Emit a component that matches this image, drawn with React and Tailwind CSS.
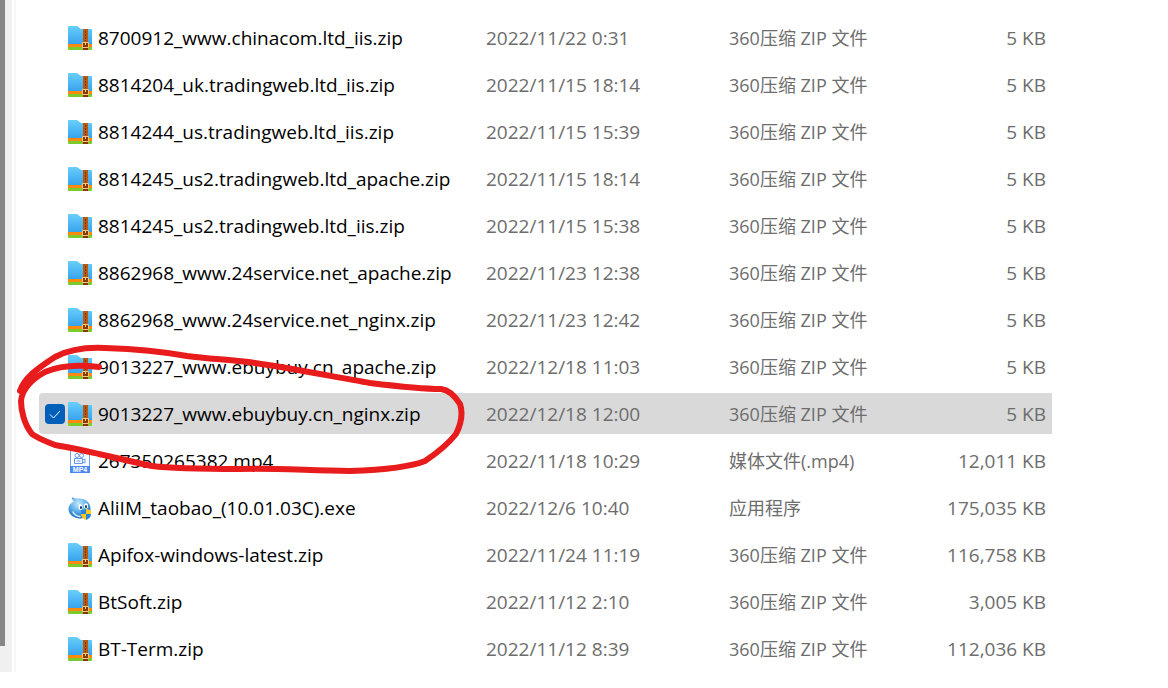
import { useState } from "react";

const FILES = [
  { name: "8700912_www.chinacom.ltd_iis.zip", date: "2022/11/22 0:31", type: "360压缩 ZIP 文件", size: "5 KB", icon: "zip" },
  { name: "8814204_uk.tradingweb.ltd_iis.zip", date: "2022/11/15 18:14", type: "360压缩 ZIP 文件", size: "5 KB", icon: "zip" },
  { name: "8814244_us.tradingweb.ltd_iis.zip", date: "2022/11/15 15:39", type: "360压缩 ZIP 文件", size: "5 KB", icon: "zip" },
  { name: "8814245_us2.tradingweb.ltd_apache.zip", date: "2022/11/15 18:14", type: "360压缩 ZIP 文件", size: "5 KB", icon: "zip" },
  { name: "8814245_us2.tradingweb.ltd_iis.zip", date: "2022/11/15 15:38", type: "360压缩 ZIP 文件", size: "5 KB", icon: "zip" },
  { name: "8862968_www.24service.net_apache.zip", date: "2022/11/23 12:38", type: "360压缩 ZIP 文件", size: "5 KB", icon: "zip" },
  { name: "8862968_www.24service.net_nginx.zip", date: "2022/11/23 12:42", type: "360压缩 ZIP 文件", size: "5 KB", icon: "zip" },
  { name: "9013227_www.ebuybuy.cn_apache.zip", date: "2022/12/18 11:03", type: "360压缩 ZIP 文件", size: "5 KB", icon: "zip" },
  { name: "9013227_www.ebuybuy.cn_nginx.zip", date: "2022/12/18 12:00", type: "360压缩 ZIP 文件", size: "5 KB", icon: "zip" },
  { name: "267350265382.mp4", date: "2022/11/18 10:29", type: "媒体文件(.mp4)", size: "12,011 KB", icon: "mp4" },
  { name: "AliIM_taobao_(10.01.03C).exe", date: "2022/12/6 10:40", type: "应用程序", size: "175,035 KB", icon: "app" },
  { name: "Apifox-windows-latest.zip", date: "2022/11/24 11:19", type: "360压缩 ZIP 文件", size: "116,758 KB", icon: "zip" },
  { name: "BtSoft.zip", date: "2022/11/12 2:10", type: "360压缩 ZIP 文件", size: "3,005 KB", icon: "zip" },
  { name: "BT-Term.zip", date: "2022/11/12 8:39", type: "360压缩 ZIP 文件", size: "112,036 KB", icon: "zip" },
];

function ZipIcon() {
  return (
    <svg viewBox="0 0 24 24" className="size-6 shrink-0" aria-hidden="true">
      <defs>
        <linearGradient id="zip-blue" x1="0" y1="0" x2="0" y2="1">
          <stop offset="0" stopColor="#68cffa" />
          <stop offset="1" stopColor="#38a3ee" />
        </linearGradient>
      </defs>
      <path d="M0 1a1 1 0 0 1 1-1h8l4 3h10a1 1 0 0 1 1 1v14H0z" fill="url(#zip-blue)" />
      <path d="M0 18h24v3H0z" fill="#ff8a0c" />
      <path d="M0 21h24v2a1 1 0 0 1-1 1H1a1 1 0 0 1-1-1z" fill="#7ccb2c" />
      <path d="M15 3h5v18h-5z" fill="#b9590f" />
      <path d="M15 21h5v3h-5z" fill="#8f3300" />
      <path d="M17.5 5v10" stroke="#7a3608" strokeWidth="1" strokeDasharray="2 1" />
      <path d="M14.5 16.5h6v5h-6z" fill="#8a3a06" stroke="#f8c878" strokeWidth="1" />
      <path d="M17.5 16v3" stroke="#f8c878" strokeWidth="1" />
    </svg>
  );
}

function Mp4Icon() {
  return (
    <svg viewBox="0 0 24 24" className="size-6 shrink-0" aria-hidden="true">
      <path d="M2.5.5h14l5 5v18h-19z" fill="#fff" stroke="#6c9ff0" />
      <g fill="none" stroke="#6297ee">
        <circle cx="9" cy="6.5" r="2" />
        <circle cx="13.5" cy="6.5" r="2" />
        <path d="M6.500 9.500h8v5h-8zM14.500 11l2.500-1v4l-2.500-1M8.500 12h4" />
      </g>
      <path d="M2 17h20v7H2z" fill="#4a8af0" />
      <text x="12" y="23" textAnchor="middle" fontSize="7" fontWeight="bold" fill="#fff" fontFamily="Liberation Sans, sans-serif">MP4</text>
    </svg>
  );
}

function AppIcon() {
  return (
    <svg viewBox="0 0 24 24" className="size-6 shrink-0" aria-hidden="true">
      <defs>
        <radialGradient id="drop" cx="0.45" cy="0.3" r="0.7">
          <stop offset="0" stopColor="#c4e9fb" />
          <stop offset="0.5" stopColor="#62b4ec" />
          <stop offset="1" stopColor="#1a6cc0" />
        </radialGradient>
      </defs>
      <path d="M4 1c1.500 1.500 4 1.500 7 1.500 7 0 11.500 4.500 11.500 10S18 22.500 12 22.500 1 19 .5 13.500C.2 10 2.500 7 6 5.500 4.500 4.500 3.500 3 4 1z" fill="url(#drop)" />
      <ellipse cx="12.500" cy="11" rx="2" ry="3" fill="#fff" />
      <ellipse cx="18" cy="10" rx="2" ry="2.800" fill="#fff" />
      <ellipse cx="13" cy="11.500" rx="1" ry="1.600" fill="#0b2d55" />
      <ellipse cx="18" cy="10.500" rx="1" ry="1.500" fill="#0b2d55" />
      <path d="M5 16c1.500 3 4 4.500 7 4.500" fill="none" stroke="#d8f0fc" strokeWidth="1.500" strokeLinecap="round" />
      <path d="M18 12.500c-1.500 1-3 1.500-5 1.500v4h5z" fill="#2b86d8" />
      <path d="M18 12.500c1.500 1 3 1.500 5 1.500v4h-5z" fill="#ffc91f" />
      <path d="M13 18h5v6c-3-1-5-3-5-6z" fill="#ffc91f" />
      <path d="M18 18h5c0 3-2 5-5 6z" fill="#2b86d8" />
    </svg>
  );
}

const ICONS = { zip: ZipIcon, mp4: Mp4Icon, app: AppIcon };

function FileRow({ file, selected, onToggle }) {
  const Icon = ICONS[file.icon];
  return (
    <tr className={selected ? "bg-[#d9d9d9]" : "bg-white"}>
      <td className="h-[41px] p-0 rounded-l-sm">
        <label className="flex items-center pl-1.5">
          <span className="relative flex size-5 shrink-0">
            <input
              type="checkbox"
              checked={selected}
              onChange={onToggle}
              className="size-5 appearance-none rounded opacity-0 checked:bg-[#005fb8] checked:opacity-100"
            />
            {selected && (
              <svg viewBox="0 0 20 20" className="absolute inset-0 size-5 pointer-events-none" aria-hidden="true">
                <path d="M5 10.500l3.500 3.500L15 7" fill="none" stroke="#fff" strokeWidth="1" />
              </svg>
            )}
          </span>
          <span className="ml-[3px] mr-1.5 flex">
            <Icon />
          </span>
          <span className="whitespace-nowrap text-black">{file.name}</span>
        </label>
      </td>
      <td className="p-0 whitespace-nowrap">{file.date}</td>
      <td className="p-0 whitespace-nowrap text-[18px]">{file.type}</td>
      <td className="p-0 pr-1.5 text-right whitespace-nowrap">{file.size}</td>
    </tr>
  );
}

// red pen loop around the selected row
function PenMark() {
  return (
    <svg width="480" height="490" viewBox="0 0 480 490" className="absolute top-0 left-0 pointer-events-none" aria-hidden="true">
      <path
        d="M20 391C24 378 38 368 55 357C70 349 85 347 105 348C135 349 165 352 187 356C210 359 235 360 255 363C290 368 335 377 370 383C395 386 420 389 441 389C449 390 455 396 460 404C463 413 461 424 456 434C448 444 437 453 425 461C408 468 380 470 350 471C300 470 270 468 240 469C210 469 175 469 152 466C115 458 85 450 55 445C45 441 37 438 32 434C24 424 21 410 21 401C22 390 29 381 45 372C58 366 75 364 99 367"
        fill="none"
        stroke="#e81c1c"
        strokeWidth="6"
        strokeLinecap="round"
        strokeLinejoin="round"
      />
    </svg>
  );
}

export default function App() {
  const [selected, setSelected] = useState([8]);

  function toggle(index) {
    setSelected((prev) =>
      prev.includes(index) ? prev.filter((i) => i !== index) : [...prev, index]
    );
  }

  return (
    <div className="relative min-h-screen bg-white">
      <div className="flex">
        <div className="w-3 shrink-0 bg-[#f0f0f0]">
          <div className="h-[646px] w-[5px] bg-[#868686]" />
        </div>
        <div className="ml-0.5 w-0.5 shrink-0 bg-[#f7f7f7]" />
        <main className="min-w-0 flex-1 pt-[11px] pr-[116px] pl-[23px]">
          <table className="-mb-[3px] w-full table-fixed border-separate border-spacing-x-0 border-spacing-y-[6px] font-['Open_Sans','Noto_Sans_CJK_SC',sans-serif] text-[19px] leading-6 text-[#6d6d6d]">
            <colgroup>
              <col className="w-[447px]" />
              <col className="w-[243px]" />
              <col className="w-[180px]" />
              <col />
            </colgroup>
            <tbody>
              {FILES.map((file, i) => (
                <FileRow
                  key={file.name}
                  file={file}
                  selected={selected.includes(i)}
                  onToggle={() => toggle(i)}
                />
              ))}
            </tbody>
          </table>
        </main>
      </div>
      <PenMark />
    </div>
  );
}
